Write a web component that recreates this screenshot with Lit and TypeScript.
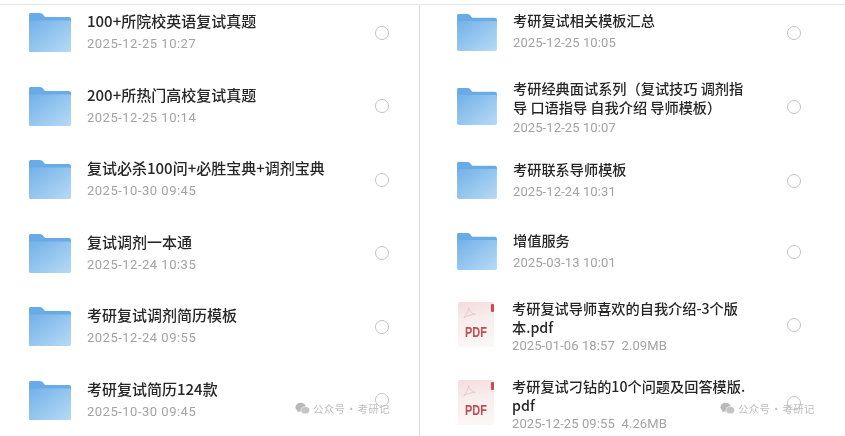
import { LitElement, html, css, svg } from "lit";
import { customElement } from "lit/decorators.js";

type Row = { t: string[]; d: string; pdf?: boolean };

const left: Row[] = [
  { t: ["100+所院校英语复试真题"], d: "2025-12-25 10:27" },
  { t: ["200+所热门高校复试真题"], d: "2025-12-25 10:14" },
  { t: ["复试必杀100问+必胜宝典+调剂宝典"], d: "2025-10-30 09:45" },
  { t: ["复试调剂一本通"], d: "2025-12-24 10:35" },
  { t: ["考研复试调剂简历模板"], d: "2025-12-24 09:55" },
  { t: ["考研复试简历124款"], d: "2025-10-30 09:45" },
];
const right: Row[] = [
  { t: ["考研复试相关模板汇总"], d: "2025-12-25 10:05" },
  { t: ["考研经典面试系列（复试技巧 调剂指", "导 口语指导 自我介绍 导师模板）"], d: "2025-12-25 10:07" },
  { t: ["考研联系导师模板"], d: "2025-12-24 10:31" },
  { t: ["增值服务"], d: "2025-03-13 10:01" },
  { t: ["考研复试导师喜欢的自我介绍-3个版", "本.pdf"], d: "2025-01-06 18:57  2.09MB", pdf: true },
  { t: ["考研复试刁钻的10个问题及回答模版.", "pdf"], d: "2025-12-25 09:55  4.26MB", pdf: true },
];

const folder = svg`<svg class="icon" viewBox="0 0 42 39">
  <defs>
    <linearGradient id="fb" x1="0" y1="0" x2="1" y2="1">
      <stop offset="0" stop-color="#72b1e8"/><stop offset="1" stop-color="#b7daf6"/>
    </linearGradient>
  </defs>
  <path d="M0 1.5Q0 0 1.5 0H11Q13 0 14 1.5L16 4H40Q42 4 42 6V12H0Z" fill="#68abe6"/>
  <path d="M0 7.5H40.5Q42 7.5 42 9V37.5Q42 39 40.5 39H1.5Q0 39 0 37.5Z" fill="url(#fb)"/>
</svg>`;

const wechat = svg`<svg viewBox="0 0 16 14" width="15" height="13">
  <ellipse cx="6" cy="5.6" rx="5.6" ry="4.8" fill="#b9b9b9"/>
  <path d="M2.8 8.6L2.4 11L5 9.8Z" fill="#b9b9b9"/>
  <ellipse cx="11" cy="8.8" rx="4.6" ry="3.9" fill="#c4c4c4" stroke="#fff" stroke-width=".6"/>
</svg>`;

@customElement("app-root")
export class AppRoot extends LitElement {
  static styles = css`
    :host {
      display: block;
      width: 845px;
      height: 436px;
      overflow: hidden;
      background: #fff;
      font-family: "Noto Sans CJK SC", "Noto Sans", sans-serif;
    }
    .page {
      display: grid;
      grid-template-columns: 419px 1px 1fr;
      height: 431px;
      margin-top: 4px;
      border-top: 1px solid #e6e6e6;
      filter: blur(0.35px);
    }
    .divider { background: #dcdcdc; }
    .col { position: relative; display: flex; flex-direction: column; }
    .col.l { padding: 8px 30px 0 29px; gap: 34.6px; }
    .col.r { padding: 9px 44px 0 37px; }
    .row { display: flex; align-items: center; height: 39px; flex: none; }
    .col.r .row { height: 37px; }
    .col.r .row:nth-child(2) { margin-top: 37px; }
    .col.r .row:nth-child(3) { margin-top: 37px; }
    .col.r .row:nth-child(4) { margin-top: 34px; }
    .col.r .row:nth-child(5) { margin-top: 36px; }
    .col.r .row:nth-child(6) { margin-top: 41px; }
    .icon { flex: none; display: block; width: 42px; height: 39px; }
    .col.r .icon { width: 40px; height: 37px; }
    .pdf {
      flex: none;
      position: relative;
      width: 36px;
      height: 45px;
      margin-left: 1px;
      background: linear-gradient(170deg, #f5dcdc 0%, #f8eded 40%, #fcf8f8 100%);
      border-radius: 2px;
      display: flex;
      align-items: flex-end;
      justify-content: center;
      padding-bottom: 8px;
      box-sizing: border-box;
    }
    .pdf span {
      font: 700 14px/1 "Liberation Sans", sans-serif;
      color: #bf4f53;
      transform: scaleX(0.78);
    }
    .pdf svg { position: absolute; left: 5px; top: 5px; }
    .pdf::after {
      content: "";
      position: absolute;
      right: 0;
      top: 2px;
      width: 3px;
      height: 8px;
      background: #cf4a50;
      border-radius: 1px;
    }
    .text { flex: 1; min-width: 0; margin-left: 16px; margin-bottom: 1px; display: flex; flex-direction: column; }
    .col.r .text { margin-bottom: 3px; }
    .col.r .text.file { margin-left: 18px; }
    .title { font-size: 15px; line-height: 19px; color: #262626; white-space: nowrap; font-weight: 500; }
    .col.r .title { font-size: 14.2px; }
    .date {
      font: 13px/18px Roboto, sans-serif;
      letter-spacing: 0.5px;
      color: #a3a3a3;
      margin-top: 5px;
      white-space: pre;
    }
    .col.r .date { letter-spacing: 0.1px; margin-top: 4px; }
    .col.r .row:nth-child(3) .text,
    .col.r .row:nth-child(4) .text { margin-bottom: 1px; }
    .col.r .row.two .date { margin-top: 2px; }
    .col.r .row.two .text { margin-bottom: 0; margin-top: 2px; }
    .col.r .row.two .text.file { margin-top: 4px; }
    .col.r .row.two .text.file .date { margin-top: 0; }
    .radio {
      flex: none;
      box-sizing: border-box;
      width: 14px;
      height: 14px;
      border: 1.2px solid #c2c2c2;
      border-radius: 50%;
    }
    .mark {
      position: absolute;
      display: flex;
      align-items: center;
      gap: 3px;
      font-size: 10.5px;
      letter-spacing: 0.3px;
      word-spacing: -2px;
      color: #bdbdbd;
      bottom: 20px;
      white-space: nowrap;
    }
    .col.l .mark { left: 295px; }
    .col.r .mark { left: 300px; }
  `;

  private renderRow(r: Row) {
    return html`<div class="row ${r.t.length > 1 ? "two" : ""}">
      ${r.pdf
        ? html`<div class="pdf">
            <svg viewBox="0 0 16 16" width="13" height="13" fill="none" stroke="#e6c6c6" stroke-width="1.1">
              <path d="M7 1C6 6 3 11 1 13C5 11 10 9 15 9C11 8 8 5 7 1Z" />
            </svg>
            <span>PDF</span>
          </div>`
        : folder}
      <div class="text ${r.pdf ? "file" : ""}">
        ${r.t.map((l) => html`<div class="title">${l}</div>`)}
        <div class="date">${r.d}</div>
      </div>
      <div class="radio"></div>
    </div>`;
  }

  render() {
    const mark = html`<div class="mark">${wechat}<span>公众号 · 考研记</span></div>`;
    return html`<div class="page">
      <div class="col l">${left.map((r) => this.renderRow(r))}${mark}</div>
      <div class="divider"></div>
      <div class="col r">${right.map((r) => this.renderRow(r))}${mark}</div>
    </div>`;
  }
}
